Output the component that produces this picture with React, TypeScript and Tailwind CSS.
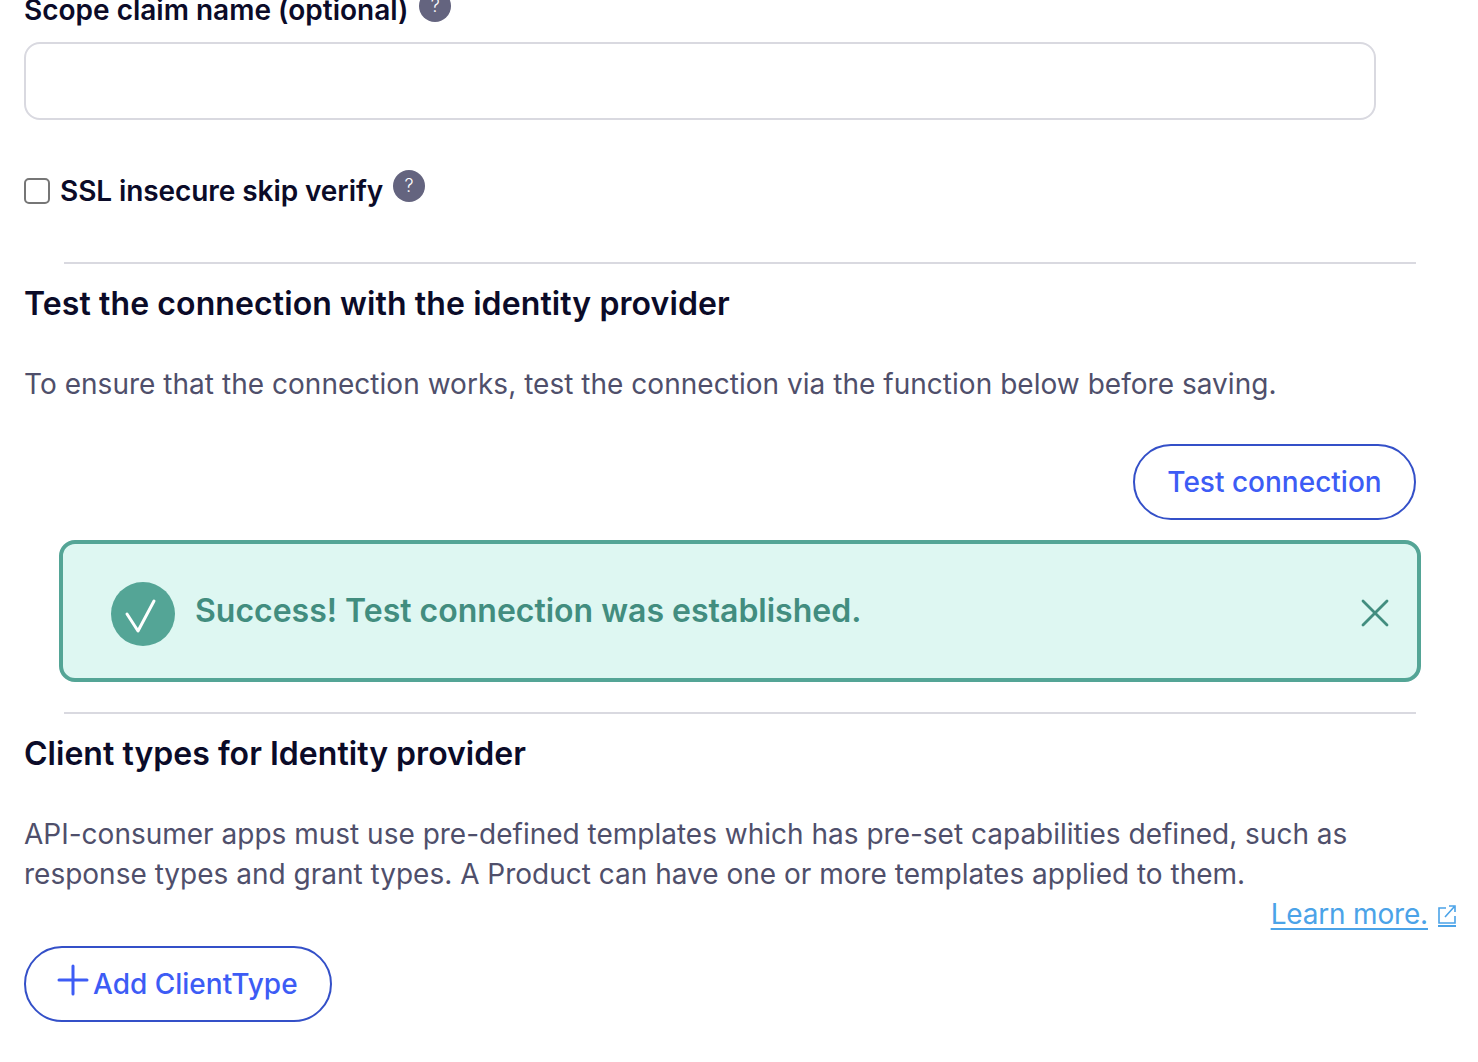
import { Plus, X } from "lucide-react";

function HelpBadge({ className }: { className: string }) {
  return (
    <span className={`flex h-8 w-8 items-center justify-center rounded-full bg-[#64647f] text-[18px] font-light leading-none text-white ${className}`}>
      ?
    </span>
  );
}

export default function App() {
  return (
    <div className="h-[1062px] overflow-hidden bg-white font-['Inter',sans-serif] text-[#0b0b28]">
      <div className="-mt-[10px] w-[1478px] pl-6">
        <div className="flex h-[40px] items-start">
          <label className="text-[28px] font-semibold leading-[40px]">Scope claim name (optional)</label>
          <HelpBadge className="ml-[11px]" />
        </div>
        <input className="mt-3 block h-[78px] w-[1352px] rounded-2xl border-2 border-[#d9d9e0] bg-white" />

        <div className="mt-[51px] flex h-[40px] items-center">
          <span className="h-[26px] w-[26px] rounded-[5px] border-2 border-[#767676] bg-white" />
          <label className="ml-[10px] text-[28px] font-semibold leading-[40px] tracking-[-0.08px]">SSL insecure skip verify</label>
          <HelpBadge className="-mt-[10px] ml-[10px]" />
        </div>

        <div className="ml-10 mt-[51px] h-[2px] w-[1352px] bg-[#d9d9e0]" />
        <h2 className="mt-5 text-[32px] font-semibold leading-[40px] tracking-[0.1px]">Test the connection with the identity provider</h2>
        <p className="mt-10 text-[28px] leading-[40px] tracking-[0.03px] text-[#4f4f6b]">
          To ensure that the connection works, test the connection via the function below before saving.
        </p>
        <div className="mt-10 flex w-[1392px] justify-end">
          <button className="h-[76px] w-[283px] rounded-full border-2 border-[#3450c8] text-[28px] font-medium text-[#3d5cf5]">
            Test connection
          </button>
        </div>

        <div className="ml-[35px] mt-5 flex h-[142px] w-[1362px] items-center rounded-2xl border-4 border-[#54a596] bg-[#def7f2] pl-12 pr-[18px]">
          <span className="mt-[6px] flex h-16 w-16 items-center justify-center rounded-full bg-[#54a596]">
            <svg width="64" height="64" viewBox="0 0 64 64" fill="none">
              <path d="M16 32 L27 49 L43 19" stroke="white" strokeWidth="3" strokeLinecap="round" strokeLinejoin="round" />
            </svg>
          </span>
          <span className="ml-5 flex-1 text-[32px] font-semibold leading-[40px] text-[#428d7f]">
            Success! Test connection was established.
          </span>
          <X size={48} strokeWidth={1.4} className="mt-1 text-[#428d7f]" />
        </div>

        <div className="ml-10 mt-[30px] h-[2px] w-[1352px] bg-[#d9d9e0]" />
        <h2 className="mt-5 text-[32px] font-semibold leading-[40px] tracking-[0.03px]">Client types for Identity provider</h2>
        <p className="mt-10 w-[1352px] text-[28px] leading-[40px] text-[#4f4f6b]">
          API-consumer apps must use pre-defined templates which has pre-set capabilities defined, such as response types and grant types. A Product can have one or more templates applied to them.
        </p>
        <div className="flex h-[40px] w-[1432px] items-center justify-end">
          <a className="text-[28px] leading-[40px] tracking-[-0.18px] text-[#4ba3e8] underline underline-offset-4">Learn more.</a>
          <svg className="ml-[10px] mt-[4px]" width="18" height="22" viewBox="0 0 18 22" fill="none" stroke="#4ba3e8" strokeWidth="1.6">
            <path d="M8 3 H1 V18 H17 V11" />
            <path d="M7 12 L16 2 M11 1 H17 V7" />
            <path d="M0 21 H18" strokeWidth="2" />
          </svg>
        </div>
        <button className="mt-3 flex h-[76px] w-[308px] items-center rounded-full border-2 border-[#3450c8] pl-[23px] text-[28px] font-medium text-[#3d5cf5]">
          <Plus size={48} strokeWidth={1.5} className="-mt-2 shrink-0" />
          <span className="-ml-[4px]">Add ClientType</span>
        </button>
      </div>
    </div>
  );
}
